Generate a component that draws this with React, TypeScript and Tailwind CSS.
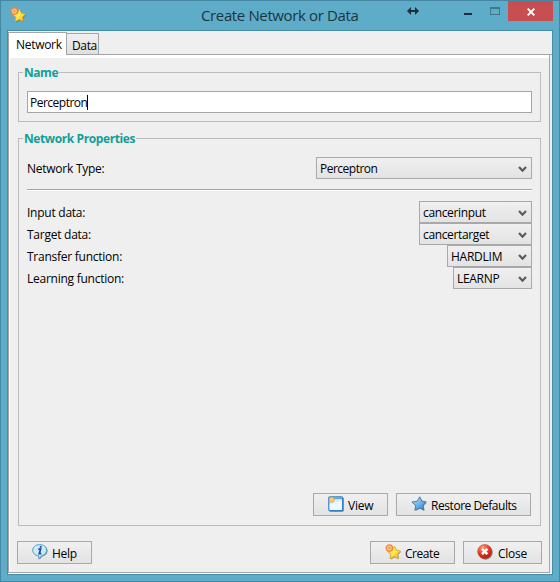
import { useId, type ReactNode } from 'react';

const STAR = 'M8.7.8 10.9 5.1 15.2 5.9 12.1 9.1 12.8 14 8.5 11.9 3.9 14.2 4.7 9.300.900 6 6.300 5.200Z';

function StarIcon({ blue = false, badge = false }: { blue?: boolean; badge?: boolean }) {
  const id = useId();
  return (
    <svg width="16" height="16" viewBox="0 0 16 16" className="block shrink-0">
      <defs>
        <linearGradient id={id} x1="0" y1="0" x2="1" y2="1">
          <stop offset="0" stopColor={blue ? '#d3edfc' : '#fff7a8'} />
          <stop offset="0.5" stopColor={blue ? '#6db5ec' : '#ffe745'} />
          <stop offset="1" stopColor={blue ? '#327cc5' : '#f5a91d'} />
        </linearGradient>
      </defs>
      <g transform={badge ? 'translate(1.400 1.500) scale(.93)' : undefined}>
        <path d={STAR} transform="translate(.7 .9)" fill="#444" opacity=".5" />
        <path d={STAR} fill={`url(#${id})`} stroke={blue ? '#3b76a8' : '#d6a43a'} strokeWidth=".9" strokeLinejoin="round" />
      </g>
      {badge && (
        <>
          <circle cx="4.300" cy="4.100" r="3.200" fill="#ffc070" stroke="#ee8444" strokeWidth="1.300" />
          <circle cx="4.300" cy="4.100" r="1.100" fill="#f0935a" />
        </>
      )}
    </svg>
  );
}

function ViewIcon() {
  return (
    <svg width="16" height="16" viewBox="0 0 16 16" className="block shrink-0">
      <rect x="1.300" y="1.300" width="14.500" height="14.500" rx="1.500" fill="#444" opacity=".65" />
      <rect x=".8" y=".8" width="13.800" height="13.800" rx="1.200" fill="#d8edff" stroke="#2f7fce" strokeWidth="1.200" />
      <path d="M1.400 2.200h12.600" stroke="#5aa5ec" strokeWidth="1.800" />
      <path d="M1.600 8.500 13.800 4.800V14H1.600Z" fill="#fff" opacity=".6" />
      <circle cx="3.800" cy="3.700" r="2.500" fill="#ffd060" stroke="#eea437" />
    </svg>
  );
}

function HelpIcon() {
  return (
    <svg width="16" height="16" viewBox="0 0 16 16" className="block shrink-0">
      <path d="M8.600 1.200c4 0 6.900 2.300 6.900 5.600 0 2.800-2 4.700-4.900 5.400L7.600 15.500v-3.200C3.900 12 1.500 9.800 1.500 6.800c0-3.300 3.100-5.600 7.100-5.600Z" fill="#234" opacity=".65" />
      <path d="M7.700.6c4 0 6.900 2.300 6.900 5.600 0 2.800-2 4.700-4.700 5.500L6.700 14.800v-3C3.100 11.400.7 9.200.7 6.200.7 2.900 3.700.6 7.700.6Z" fill="#caeaf9" stroke="#519cc3" />
      <path d="M8.700 2.100v1.600M6.400 5.200h2.200L7.300 9.600h2" fill="none" stroke="#15479f" strokeWidth="1.700" />
    </svg>
  );
}

function CloseIcon() {
  return (
    <svg width="16" height="16" viewBox="0 0 16 16" className="-ml-px mr-px block shrink-0">
      <defs>
        <radialGradient id="close-red" cx=".35" cy=".2" r=".85">
          <stop offset="0" stopColor="#ff9a78" />
          <stop offset=".55" stopColor="#e8391f" />
          <stop offset="1" stopColor="#b61709" />
        </radialGradient>
      </defs>
      <circle cx="8.500" cy="8.500" r="7.200" fill="#333" opacity=".6" />
      <circle cx="7.700" cy="7.500" r="7" fill="url(#close-red)" stroke="#c43a25" strokeWidth=".6" />
      <path d="m5 4.800 5.400 5.400m0-5.400-5.400 5.400" stroke="#fff" strokeWidth="2.500" />
    </svg>
  );
}

function Button({ icon, className, children }: { icon: ReactNode; className: string; children: ReactNode }) {
  return (
    <button className={`flex h-[23px] shrink-0 items-start border border-[#a9a9ac] bg-linear-to-b from-[#f0f0f0] to-[#e3e3e3] pl-[14px] pt-[2px] ${className}`}>
      {icon}
      <span className="ml-[4px] mt-[2px] leading-4">{children}</span>
    </button>
  );
}

function Select({ className, children }: { className: string; children: ReactNode }) {
  return (
    <button className={`flex h-[22px] items-center justify-between border border-[#a9a9ac] bg-linear-to-b from-[#f0f0f0] to-[#e3e3e3] pl-[3px] pr-[4px] ${className}`}>
      <span className="pt-[2px] leading-4">{children}</span>
      <svg width="9" height="7" viewBox="0 0 9 7" className="mt-[2px]">
        <path d="m1 1 3.500 3.700L8 1" fill="none" stroke="#5b5b5b" strokeWidth="2.200" />
      </svg>
    </button>
  );
}

function Group({ title, titleClass, className, children }: { title: string; titleClass: string; className: string; children: ReactNode }) {
  return (
    <section className={`relative ml-[8px] w-[523px] border border-[#bcbcbc] ${className}`}>
      <h2 className={`absolute -top-[8px] left-[4px] bg-[#efefef] px-px font-bold leading-4 text-[#129e9b] ${titleClass}`}>{title}</h2>
      {children}
    </section>
  );
}

const rows = [
  { label: 'Input data:', value: 'cancerinput', size: 'w-[113px] tracking-[-0.36px]' },
  { label: 'Target data:', value: 'cancertarget', size: 'w-[113px] tracking-[-0.36px]' },
  { label: 'Transfer function:', value: 'HARDLIM', size: 'w-[85px]' },
  { label: 'Learning function:', value: 'LEARNP', size: 'w-[79px] tracking-[-0.3px]' },
];

export default function App() {
  return (
    <div className="h-[582px] w-[560px] overflow-hidden whitespace-nowrap border border-[#4487a3] bg-[#5eacc8] font-['Open_Sans','Noto_Sans',sans-serif] text-[12px] tracking-[-0.25px] text-black">
      <header className="flex h-[29px] items-start">
        <div className="ml-[9px] mt-[6px]"><StarIcon badge /></div>
        <h1 className="ml-[175px] mt-[4px] w-[160px] text-[15px] leading-5 tracking-[-0.37px] text-[#193640]">Create Network or Data</h1>
        <svg width="12" height="8" viewBox="0 0 12 8" className="ml-[46px] mt-[6px]">
          <path d="M4 0v3h4V0l4 4-4 4V5H4v3L0 4Z" fill="#1d3037" />
        </svg>
        <div className="ml-[45px] mt-[12px] h-[2px] w-[8px] bg-[#1d3037]" />
        <div className="ml-[18px] mt-[6px] h-[8px] w-[10px] border border-t-2 border-[#427789]" />
        <button className="ml-[8px] flex h-[20px] w-[45px] items-center justify-center bg-[#c84f51]">
          <svg width="8" height="8" viewBox="0 0 8 8" className="mt-px"><path d="m.7.7 6.600 6.600m0-6.600L.7 7.300" stroke="white" strokeWidth="1.900" /></svg>
        </button>
      </header>
      <main className="ml-[6px] h-[545px] w-[546px] border border-[#478ca8] bg-[#efefef]">
        <nav className="flex h-[24px] items-end border-b border-[#a5a5a8]">
          <div className="relative -mb-px h-[23px] w-[59px] border border-b-0 border-[#a5a5a8] bg-white pl-[7px] pt-[4px] leading-4 tracking-[-0.3px]">Network</div>
          <div className="h-[21px] w-[32px] border border-b-0 border-l-0 border-[#a5a5a8] bg-linear-to-b from-[#f0f0f0] to-[#dfdfdf] pl-[5px] pt-[4px] leading-4 tracking-[-0.35px]">Data</div>
        </nav>
        <div className="h-[518px] w-[542px] border-x border-b border-[#a5a5a8]">
          <div className="h-[517px] border-l border-t-[3px] border-white pt-[14px]">
            <Group title="Name" titleClass="tracking-[-0.45px]" className="h-[50px] px-[8px] pt-[18px]">
              <div className="flex h-[22px] w-[505px] items-center border border-[#a5a5a8] bg-white pl-[2px]">
                <span className="pt-[2px] leading-4 tracking-[-0.5px]">Perceptron</span><span className="h-[15px] w-px bg-black" />
              </div>
            </Group>
            <Group title="Network Properties" titleClass="tracking-[-0.4px]" className="mt-[16px] flex h-[388px] flex-col px-[8px] pt-[18px]">
              <div className="flex w-[505px] items-center justify-between">
                <span className="pt-[2px]">Network Type:</span><Select className="w-[216px] tracking-[-0.5px]">Perceptron</Select>
              </div>
              <div className="mb-[10px] mt-[10px] h-[2px] w-[505px] shrink-0 border-b border-t border-b-white border-t-[#a5a5a8]" />
              {rows.map((row) => (
                <div key={row.label} className="flex w-[505px] items-center justify-between">
                  <span className="pt-[2px]">{row.label}</span><Select className={row.size}>{row.value}</Select>
                </div>
              ))}
              <div className="mb-[9px] mr-px mt-auto flex justify-end gap-[8px]">
                <Button icon={<ViewIcon />} className="w-[75px]">View</Button>
                <Button icon={<StarIcon blue />} className="w-[135px] tracking-[-0.44px]">Restore Defaults</Button>
              </div>
            </Group>
            <footer className="ml-[7px] mt-[15px] flex w-[525px]">
              <Button icon={<HelpIcon />} className="w-[75px]">Help</Button>
              <Button icon={<StarIcon badge />} className="ml-auto w-[85px] tracking-[-0.45px]">Create</Button>
              <Button icon={<CloseIcon />} className="ml-[8px] w-[79px]">Close</Button>
            </footer>
          </div>
        </div>
        <div className="h-px bg-white" />
      </main>
    </div>
  );
}
